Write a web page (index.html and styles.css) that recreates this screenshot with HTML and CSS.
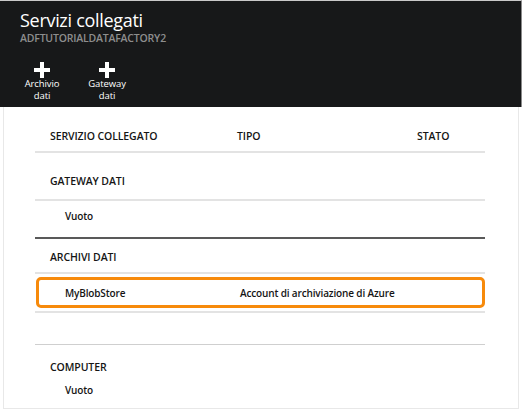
FILE: index.html
```html
<!DOCTYPE html>
<html lang="it">
<head>
<meta charset="utf-8">
<title>Servizi collegati</title>
<link rel="stylesheet" href="styles.css">
</head>
<body>
<div class="blade">
  <header class="head">
    <h1 class="title">Servizi collegati</h1>
    <div class="subtitle">ADFTUTORIALDATAFACTORY2</div>
    <div class="commands">
      <div class="cmd">
        <svg class="plus" width="16" height="16" viewBox="0 0 16 16"><rect x="6" y="0" width="4" height="16" fill="#fff"/><rect x="0" y="6" width="16" height="4" fill="#fff"/></svg>
        <span class="cmd-label">Archivio<br>dati</span>
      </div>
      <div class="cmd">
        <svg class="plus" width="16" height="16" viewBox="0 0 16 16"><rect x="6" y="0" width="4" height="16" fill="#fff"/><rect x="0" y="6" width="16" height="4" fill="#fff"/></svg>
        <span class="cmd-label">Gateway<br>dati</span>
      </div>
    </div>
  </header>
  <main class="panel">
    <div class="grid">
      <div class="row colheads">
        <span class="c1">SERVIZIO COLLEGATO</span>
        <span class="c2">TIPO</span>
        <span class="c3">STATO</span>
      </div>
      <div class="row section s-gateway">GATEWAY DATI</div>
      <div class="row item i-gateway">Vuoto</div>
      <div class="row section s-stores">ARCHIVI DATI</div>
      <div class="row item selected">
        <span class="n">MyBlobStore</span>
        <span class="t">Account di archiviazione di Azure</span>
      </div>
      <div class="spacer"></div>
      <div class="row section s-computer">COMPUTER</div>
      <div class="row item i-computer">Vuoto</div>
    </div>
  </main>
</div>
</body>
</html>
```

FILE: styles.css
```css
* { box-sizing: border-box; }
html, body { margin: 0; padding: 0; background: #fff; }
body {
  width: 522px;
  height: 411px;
  font-family: "Open Sans", "Noto Sans", sans-serif;
  color: #151515;
}
.blade { width: 522px; }
.head {
  height: 107px;
  background: #171819;
  border-top: 1px solid #c9c9c9;
  border-right: 1px solid #8a8a8a;
  padding: 8px 0 0 20px;
  color: #fff;
}
.title {
  margin: 0;
  font-weight: 400;
  font-size: 18px;
  line-height: 22px;
  letter-spacing: -0.3px;
}
.subtitle {
  margin-top: 1px;
  font-size: 10.5px;
  line-height: 12px;
  font-weight: 600;
  color: #8e8e8e;
  letter-spacing: -0.2px;
}
.commands {
  display: flex;
  margin-top: 18px;
  margin-left: -3px;
}
.cmd {
  width: 50px;
  display: flex;
  flex-direction: column;
  align-items: center;
}
.cmd + .cmd { margin-left: 15px; }
.plus { display: block; }
.cmd-label {
  margin-top: 0;
  font-size: 9.5px;
  line-height: 12px;
  text-align: center;
  letter-spacing: -0.1px;
}
.panel {
  margin: 0 3px;
  width: 516px;
  height: 302px;
  border-left: 1px solid #e8e8e8;
  border-right: 1px solid #e8e8e8;
  border-bottom: 1px solid #e8e8e8;
  padding: 0 32px 0 31px;
}
.grid { width: 450px; }
.row {
  font-size: 10px;
  font-weight: 600;
  line-height: 14px;
  letter-spacing: -0.15px;
  display: flex;
}
.colheads, .section {
  font-size: 10.5px;
  letter-spacing: -0.1px;
}
.colheads {
  padding: 22px 0 8px 15px;
  border-bottom: 2px solid #e3e3e3;
}
.colheads .c1 { width: 187px; }
.colheads .c2 { width: 180px; }
.section { padding-left: 15px; }
.s-gateway {
  padding-top: 21px;
  padding-bottom: 11px;
  border-bottom: 2px solid #e3e3e3;
}
.item { padding-left: 30px; }
.i-gateway {
  padding-top: 8px;
  padding-bottom: 14px;
  border-bottom: 2px solid #595959;
}
.s-stores {
  padding-top: 11px;
  padding-bottom: 8px;
  border-bottom: 2px solid #e3e3e3;
}
.selected {
  margin: 3px 0 0 1px;
  height: 31px;
  border: 3px solid #f78a0b;
  border-radius: 5px;
  padding-left: 26px;
  align-items: center;
}
.selected .n { width: 175px; }
.spacer {
  margin-top: 3px;
  height: 34px;
  border-top: 2px solid #e3e3e3;
  border-bottom: 1px solid #cfcfcf;
}
.s-computer { padding-top: 15px; }
.i-computer { padding-top: 9px; }
```
